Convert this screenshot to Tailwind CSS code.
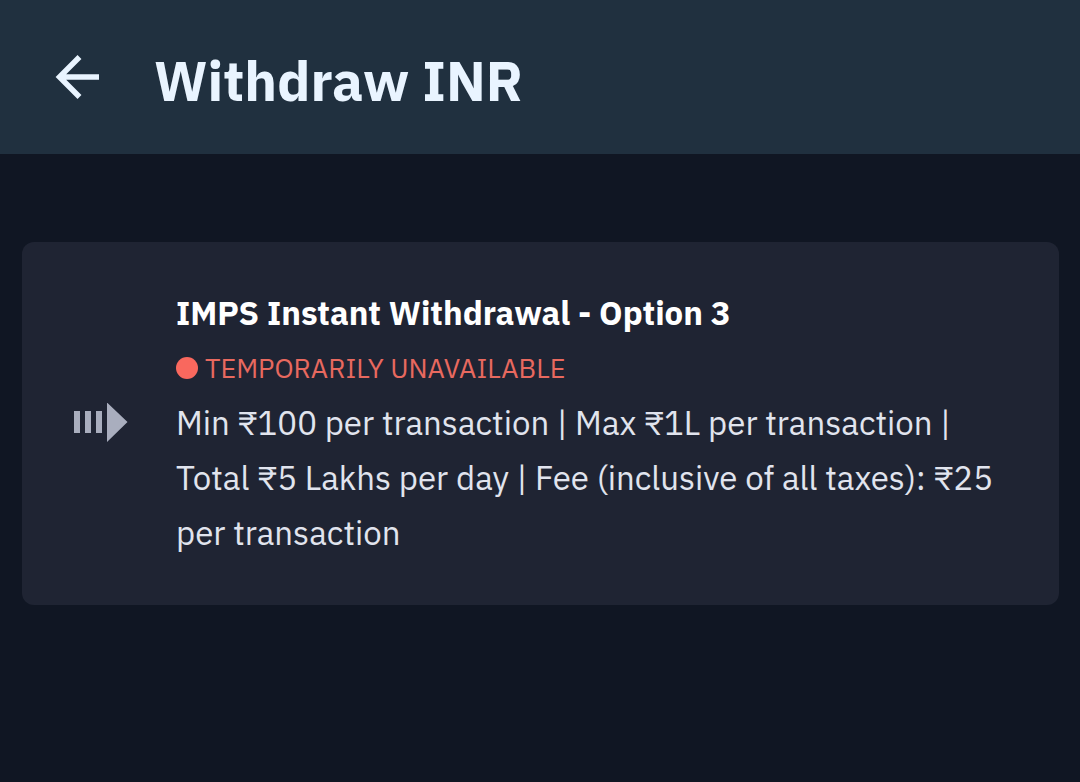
<!DOCTYPE html>
<html lang="en">
<head>
    <meta charset="UTF-8">
    <meta name="viewport" content="width=device-width, initial-scale=1.0">
    <title>Withdraw INR</title>
    <script src="https://cdn.jsdelivr.net/npm/@tailwindcss/browser@4"></script>
</head>
<body class="min-h-screen bg-[#101623] font-['IBM_Plex_Sans','Noto_Sans',sans-serif]">
    <!-- Header -->
    <header class="flex items-center bg-[#20303f] px-[50px] pt-[45px] pb-[37px]">
        <button type="button" aria-label="Back" class="mr-[48px] h-[56px] w-[56px] shrink-0 text-[#e9f4ff]">
            <svg xmlns="http://www.w3.org/2000/svg" class="h-[56px] w-[56px]" viewBox="0 0 56 56" fill="none" stroke="currentColor" stroke-width="5.5">
                <path d="M49 24H10M29.5 4L9.5 24l20 20" />
            </svg>
        </button>
        <h1 class="text-[55px] leading-[72px] font-bold text-[#e9f4ff]">Withdraw INR</h1>
    </header>

    <!-- Withdrawal options -->
    <main class="pt-[88px] pr-[21px] pl-[22px]">
        <a href="#" class="flex items-center rounded-xl bg-[#1f2433] pt-[43px] pr-[44px] pb-[45px] pl-[52px]">
            <svg xmlns="http://www.w3.org/2000/svg" class="mr-[48px] h-[40px] w-[54px] shrink-0" viewBox="0 0 54 40" fill="#a9aebe">
                <path d="M0 8h6v22H0zM11 8h6v22h-6zM22 8h6v22h-6zM33 -0.5l20.5 19.5L33 39z" />
            </svg>
            <div>
                <h2 class="text-[33px] leading-[55px] font-bold text-white">IMPS Instant Withdrawal - Option 3</h2>
                <p class="flex items-center gap-[7px] text-[27px] leading-[55px] text-[#e8695f]">
                    <span class="h-[22px] w-[22px] rounded-full bg-[#f9685e]"></span>
                    TEMPORARILY UNAVAILABLE
                </p>
                <p class="text-[33px] leading-[55px] text-[#e1e4ee]">Min ₹100 per transaction | Max ₹1L per transaction | Total ₹5 Lakhs per day | Fee (inclusive of all taxes): ₹25 per transaction</p>
            </div>
        </a>
    </main>
</body>
</html>
